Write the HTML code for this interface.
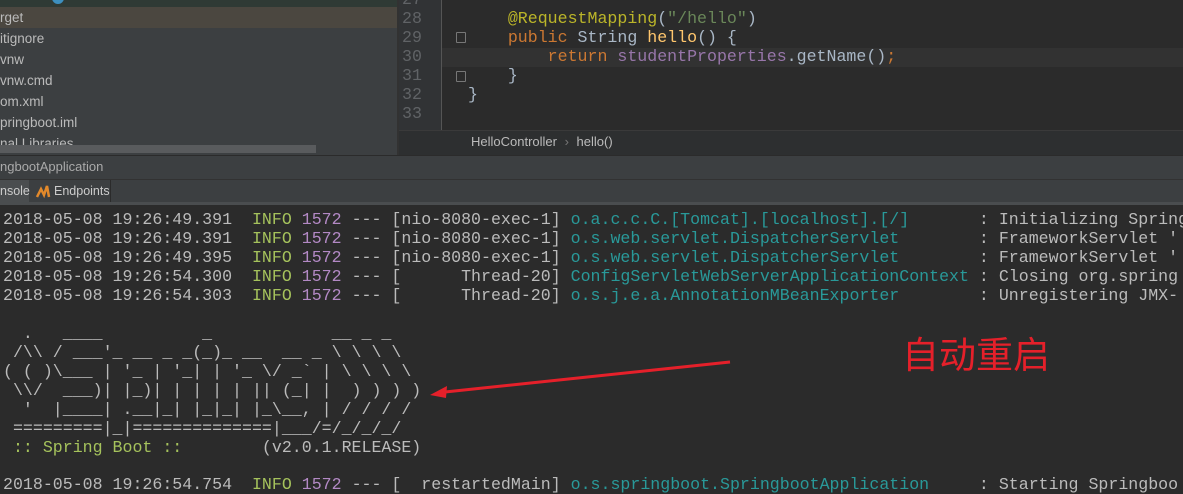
<!DOCTYPE html>
<html><head><meta charset="utf-8"><style>
*{margin:0;padding:0;box-sizing:border-box}
body{width:1183px;height:484px;overflow:hidden;background:#2b2b2b;position:relative;font-family:"Liberation Sans",sans-serif}
.abs{position:absolute}
.mono{font-family:"Liberation Mono","Courier New",monospace;font-size:16.6px;white-space:pre;line-height:19px}
.tree div{position:absolute;left:0;height:21px;line-height:21px;font-size:13.5px;color:#bbbbbb;white-space:pre}
.ln{color:#606366}
.kw{color:#cc7832}.an{color:#bbb529}.str{color:#6a8759}.fn{color:#ffc66d}.fld{color:#9876aa}.pl{color:#a9b7c6}
.c{color:#bbbbbb}.info{color:#a5c25c}.pid{color:#b389c5}.cls{color:#299999}
</style></head><body>
<div class="abs" style="left:0;top:0;width:397px;height:155px;background:#3c3f41"></div>
<div class="abs" style="left:0;top:0;width:397px;height:7px;background:#2f3a35"></div>
<div class="abs" style="left:52px;top:-8px;width:12px;height:12px;border-radius:6px;background:#3d8fbf"></div>
<div class="abs" style="left:0;top:7px;width:397px;height:21px;background:#4b4740"></div>
<div class="tree">
<div style="top:7px">rget</div>
<div style="top:28px">itignore</div>
<div style="top:49px">vnw</div>
<div style="top:70px">vnw.cmd</div>
<div style="top:91px">om.xml</div>
<div style="top:112px">pringboot.iml</div>
<div style="top:133px">nal Libraries</div>
</div>
<div class="abs" style="left:0;top:145px;width:316px;height:8px;background:#595b5d"></div>
<div class="abs" style="left:397px;top:0;width:2px;height:155px;background:#323232"></div>
<div class="abs" style="left:399px;top:0;width:42px;height:130px;background:#313335"></div>
<div class="abs" style="left:441px;top:0;width:1px;height:130px;background:#555"></div>
<div class="abs" style="left:442px;top:48px;width:741px;height:19px;background:#323232"></div>
<div class="abs mono ln" style="left:402px;top:-10px">27
28
29
30
31
32
33</div>
<div class="abs" style="left:456px;top:32px;width:10px;height:11px;border:1px solid #777;border-radius:1px"></div>
<div class="abs" style="left:456px;top:71px;width:10px;height:11px;border:1px solid #777;border-radius:1px"></div>
<div class="abs mono" style="left:468px;top:9px"><span class="an">    @RequestMapping</span><span class="pl">(</span><span class="str">"/hello"</span><span class="pl">)</span>
<span class="kw">    public </span><span class="pl">String </span><span class="fn">hello</span><span class="pl">() {</span>
<span class="kw">        return </span><span class="fld">studentProperties</span><span class="pl">.getName()</span><span class="kw">;</span>
<span class="pl">    }</span>
<span class="pl">}</span></div>
<div class="abs" style="left:399px;top:130px;width:784px;height:25px;background:#2d2f30;border-top:1px solid #3a3a3a"></div>
<div class="abs" style="left:471px;top:134px;font-size:13px;color:#bbb">HelloController <span style="color:#777;margin:0 4px">›</span> hello()</div>
<div class="abs" style="left:0;top:155px;width:1183px;height:24px;background:#3c3f41;border-top:1px solid #2b2b2b"></div>
<div class="abs" style="left:0;top:159px;font-size:13px;color:#aaa">ngbootApplication</div>
<div class="abs" style="left:0;top:179px;width:1183px;height:26px;background:#3c3f41;border-top:1px solid #323232;border-bottom:3px solid #4a4d4f"></div>
<div class="abs" style="left:0;top:180px;width:29px;height:22px;background:#4a4d4f"></div>
<div class="abs" style="left:0;top:184px;font-size:12.5px;color:#ccc">nsole</div>
<div class="abs" style="left:30px;top:180px;width:81px;height:22px;border-right:1px solid #2b2b2b;background:#3c3f41"></div>
<svg class="abs" style="left:35px;top:183px" width="16" height="16" viewBox="0 0 16 16"><path d="M2 14 L6 6 L9 12 L12 3 L14 14" fill="none" stroke="#e2892b" stroke-width="2.5"/></svg>
<div class="abs" style="left:54px;top:184px;font-size:12.5px;color:#ccc">Endpoints</div>
<div class="abs mono c" style="left:3px;top:210px">2018-05-08 19:26:49.391  <span class="info">INFO</span> <span class="pid">1572</span> --- [nio-8080-exec-1] <span class="cls">o.a.c.c.C.[Tomcat].[localhost].[/]      </span> : Initializing Spring
2018-05-08 19:26:49.391  <span class="info">INFO</span> <span class="pid">1572</span> --- [nio-8080-exec-1] <span class="cls">o.s.web.servlet.DispatcherServlet       </span> : FrameworkServlet '
2018-05-08 19:26:49.395  <span class="info">INFO</span> <span class="pid">1572</span> --- [nio-8080-exec-1] <span class="cls">o.s.web.servlet.DispatcherServlet       </span> : FrameworkServlet '
2018-05-08 19:26:54.300  <span class="info">INFO</span> <span class="pid">1572</span> --- [      Thread-20] <span class="cls">ConfigServletWebServerApplicationContext</span> : Closing org.spring
2018-05-08 19:26:54.303  <span class="info">INFO</span> <span class="pid">1572</span> --- [      Thread-20] <span class="cls">o.s.j.e.a.AnnotationMBeanExporter       </span> : Unregistering JMX-

  .   ____          _            __ _ _
 /\\ / ___'_ __ _ _(_)_ __  __ _ \ \ \ \
( ( )\___ | '_ | '_| | '_ \/ _` | \ \ \ \
 \\/  ___)| |_)| | | | | || (_| |  ) ) ) )
  '  |____| .__|_| |_|_| |_\__, | / / / /
 =========|_|==============|___/=/_/_/_/
<span class="info"> :: Spring Boot :: </span>       (v2.0.1.RELEASE)</div>
<div class="abs mono c" style="left:3px;top:475px">2018-05-08 19:26:54.754  <span class="info">INFO</span> <span class="pid">1572</span> --- [  restartedMain] <span class="cls">o.s.springboot.SpringbootApplication    </span> : Starting Springboo</div>
<svg class="abs" style="left:0;top:0" width="1183" height="484"><path d="M730 362 L445 392" stroke="#e5202a" stroke-width="3"/><path d="M430 395 L447 386 L446 398 Z" fill="#e5202a"/></svg>
<div class="abs" style="left:902px;top:332px;font-size:37px;line-height:40px;color:#e5202a;font-family:'Noto Sans CJK SC',sans-serif">自动重启</div>
</body></html>
